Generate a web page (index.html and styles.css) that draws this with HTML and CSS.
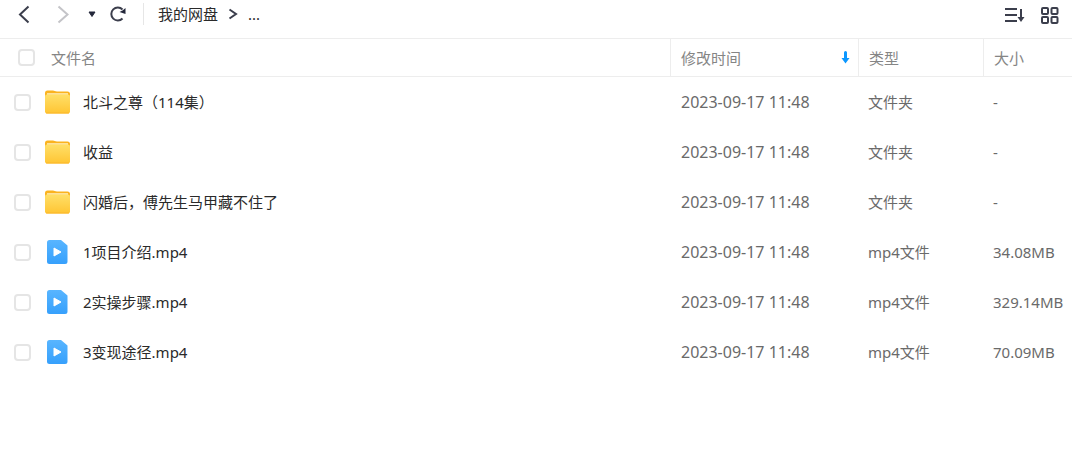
FILE: index.html
```
<!DOCTYPE html>
<html lang="zh-CN">
<head>
    <meta charset="UTF-8">
    <title>我的网盘</title>
    <link rel="stylesheet" href="styles.css">
</head>
<body>
    <!-- 图标 -->
    <svg class="icon-defs" width="0" height="0" aria-hidden="true">
        <defs>
            <linearGradient id="folderFill" x1="0" y1="0" x2="0" y2="1">
                <stop offset="0" stop-color="#ffdf68"/>
                <stop offset="1" stop-color="#ffc533"/>
            </linearGradient>
            <linearGradient id="videoFill" x1="0" y1="0" x2="0" y2="1">
                <stop offset="0" stop-color="#58b5ff"/>
                <stop offset="1" stop-color="#36a0fc"/>
            </linearGradient>
        </defs>
        <symbol id="folder" viewBox="0 0 25 25">
            <path d="M0 3a2.500 2.500 0 0 1 2.500-2.500H8c1.500 0 2 1 4 1h10.500A2.500 2.500 0 0 1 25 4v8H0z" fill="#fbb31f"/>
            <path d="M2 4h21" stroke="#fff0c2" stroke-width="1.500"/>
            <rect y="4.500" width="25" height="19" rx="2" fill="url(#folderFill)"/>
            <path d="M1 23h23" stroke="#fbb62a"/>
        </symbol>
        <symbol id="video" viewBox="0 0 25 25">
            <path d="M4.500 0H16l6.500 5.500V21.500a2.500 2.500 0 0 1-2.500 2.500H4.500A2.500 2.500 0 0 1 2 21.500V2.500A2.500 2.500 0 0 1 4.500 0z" fill="url(#videoFill)"/>
            <path d="M9 8l7 4-7 4z" fill="#fff" stroke="#fff" stroke-linejoin="round"/>
        </symbol>
    </svg>

    <!-- 工具栏 -->
    <div class="toolbar">
        <button type="button" class="tool-btn" aria-label="后退">
            <svg width="18" height="20" viewBox="0 0 18 20"><path d="M13.500 2.500L5 10.500l8.500 8" class="line"/></svg>
        </button>
        <button type="button" class="tool-btn tool-forward" aria-label="前进" disabled>
            <svg width="18" height="20" viewBox="0 0 18 20"><path d="M4.500 2.500l9 8-9 8" class="line"/></svg>
        </button>
        <button type="button" class="tool-btn tool-history" aria-label="历史">
            <svg width="10" height="20" viewBox="0 0 10 20"><path d="M2 8h6L5 12.500z" fill="#23273a" stroke="#23273a" stroke-linejoin="round"/></svg>
        </button>
        <button type="button" class="tool-btn tool-refresh" aria-label="刷新">
            <svg width="18" height="20" viewBox="0 0 18 20">
                <path d="M13.500 14.500A6.500 6.500 0 1 1 13.500 5.500" class="line"/>
                <path d="M16.500 4v6l-6-2 3-1.500z" fill="#23273a"/>
            </svg>
        </button>
        <nav class="path">
            <a href="#">我的网盘</a>
            <svg width="10" height="20" viewBox="0 0 10 20"><path d="M1.500 5.500L8 10l-6.500 4.500" class="line"/></svg>
            <a href="#">...</a>
        </nav>
        <button type="button" class="tool-btn tool-sort" aria-label="排序">
            <svg width="22" height="20" viewBox="0 0 22 20">
                <path d="M0 5h12M0 11h12M0 17h12M16 5v10" class="line"/>
                <path d="M12.500 13h7L16 18z" fill="#3b3e4c"/>
            </svg>
        </button>
        <button type="button" class="tool-btn" aria-label="网格视图">
            <svg width="18" height="20" viewBox="0 0 18 20">
                <rect x="1" y="4" width="6" height="6" rx="1" class="line"/>
                <rect x="10.500" y="4" width="6" height="6" rx="1" class="line"/>
                <rect x="1" y="13" width="6" height="6" rx="1" class="line"/>
                <rect x="10.500" y="13" width="6" height="6" rx="1" class="line"/>
            </svg>
        </button>
    </div>

    <!-- 文件列表 -->
    <table class="list">
        <thead>
            <tr>
                <th class="col-name">
                    <div class="name">
                        <input type="checkbox" id="all" class="check">
                        <label for="all">文件名</label>
                    </div>
                </th>
                <th class="col-time">
                    <div class="sort">
                        修改时间
                        <svg width="9" height="13" viewBox="0 0 9 13"><path d="M3 1.500A1.500 1.500 0 0 1 6 1.500V7h2.500L4.500 12.500.500 7H3z" fill="#0b97ff"/></svg>
                    </div>
                </th>
                <th class="col-type">类型</th>
                <th class="col-size">大小</th>
            </tr>
        </thead>
        <tbody>
            <tr>
                <td>
                    <div class="name">
                        <input type="checkbox" id="f1" class="check">
                        <svg width="25" height="25"><use href="#folder"/></svg>
                        <label for="f1">北斗之尊（114集）</label>
                    </div>
                </td>
                <td class="time">2023-09-17 11:48</td>
                <td>文件夹</td>
                <td>-</td>
            </tr>
            <tr>
                <td>
                    <div class="name">
                        <input type="checkbox" id="f2" class="check">
                        <svg width="25" height="25"><use href="#folder"/></svg>
                        <label for="f2">收益</label>
                    </div>
                </td>
                <td class="time">2023-09-17 11:48</td>
                <td>文件夹</td>
                <td>-</td>
            </tr>
            <tr>
                <td>
                    <div class="name">
                        <input type="checkbox" id="f3" class="check">
                        <svg width="25" height="25"><use href="#folder"/></svg>
                        <label for="f3">闪婚后，傅先生马甲藏不住了</label>
                    </div>
                </td>
                <td class="time">2023-09-17 11:48</td>
                <td>文件夹</td>
                <td>-</td>
            </tr>
            <tr>
                <td>
                    <div class="name">
                        <input type="checkbox" id="f4" class="check">
                        <svg width="25" height="25"><use href="#video"/></svg>
                        <label for="f4">1项目介绍.mp4</label>
                    </div>
                </td>
                <td class="time">2023-09-17 11:48</td>
                <td>mp4文件</td>
                <td>34.08MB</td>
            </tr>
            <tr>
                <td>
                    <div class="name">
                        <input type="checkbox" id="f5" class="check">
                        <svg width="25" height="25"><use href="#video"/></svg>
                        <label for="f5">2实操步骤.mp4</label>
                    </div>
                </td>
                <td class="time">2023-09-17 11:48</td>
                <td>mp4文件</td>
                <td>329.14MB</td>
            </tr>
            <tr>
                <td>
                    <div class="name">
                        <input type="checkbox" id="f6" class="check">
                        <svg width="25" height="25"><use href="#video"/></svg>
                        <label for="f6">3变现途径.mp4</label>
                    </div>
                </td>
                <td class="time">2023-09-17 11:48</td>
                <td>mp4文件</td>
                <td>70.09MB</td>
            </tr>
        </tbody>
    </table>
</body>
</html>
```
FILE: styles.css
```
* {
    margin: 0;
    padding: 0;
    box-sizing: border-box;
}

body {
    background-color: #fff;
    color: #6a6a6a;
    font: 15px/20px "Noto Sans", "Noto Sans CJK SC", sans-serif;
}

a {
    text-decoration: none;
    color: #2a2a2a;
}

svg {
    display: block;
    flex: none;
}

.icon-defs {
    position: absolute;
}

.line {
    fill: none;
    stroke: #3b3e4c;
    stroke-width: 2;
}

/* 工具栏 */
.toolbar {
    display: flex;
    align-items: center;
    height: 38px;
    padding: 0 13px 10px 15px;
}

.tool-btn {
    border: none;
    background: none;
    cursor: pointer;
}

.tool-forward {
    margin-left: 21px;
}

.tool-forward .line {
    stroke: #c4c4c8;
}

.tool-history {
    margin-left: 15px;
}

.tool-refresh {
    margin-left: 12px;
}

.path {
    display: flex;
    align-items: center;
    gap: 10px;
    flex: 1;
    height: 22px;
    margin-left: 16px;
    padding-left: 14px;
    border-left: 1px solid #e6e6e6;
}

.tool-sort {
    margin-right: 14px;
}

/* 文件列表 */
.list {
    width: 100%;
    table-layout: fixed;
    border-collapse: separate;
    border-spacing: 0;
}

.list th {
    height: 39px;
    padding-left: 10px;
    border: solid #ededed;
    border-width: 1px 0 1px 1px;
    color: #858585;
    font-weight: normal;
    text-align: left;
}

.list td {
    height: 50px;
    padding-left: 10px;
    white-space: nowrap;
}

.list .col-name {
    padding-left: 18px;
    border-left: none;
}

.list td:first-child {
    padding-left: 14px;
}

.col-time {
    width: 188px;
}

.col-type {
    width: 125px;
}

.col-size {
    width: 89px;
}

.list .time {
    padding-left: 11px;
    font-size: 16px;
}

.name {
    display: flex;
    align-items: center;
}

.name svg {
    margin-left: 14px;
}

.name label {
    margin-left: 13px;
}

td label {
    color: #2a2a2a;
}

.col-name label {
    margin-left: 16px;
}

.sort {
    display: flex;
    align-items: center;
    justify-content: space-between;
    padding-right: 8px;
}

.check {
    appearance: none;
    flex: none;
    width: 17px;
    height: 17px;
    border: 2px solid #e5e5e5;
    border-radius: 4px;
    background-color: #fff;
}

.check:checked {
    border-color: #0b97ff;
    background-color: #0b97ff;
}
```
